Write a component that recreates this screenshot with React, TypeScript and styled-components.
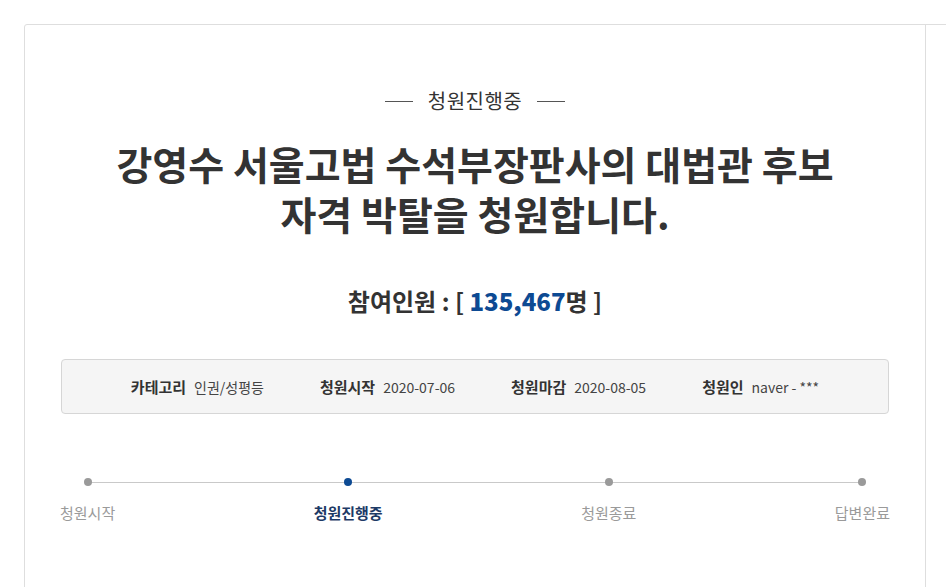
import React from 'react';
import styled, {createGlobalStyle} from 'styled-components';

const GlobalStyle = createGlobalStyle`
  html, body {
    margin: 0;
    background: #fff;
    overflow: hidden;
  }
  body {
    font-family: "Noto Sans CJK KR", "Noto Sans", sans-serif;
    color: #333;
  }
`;

const Page = styled.div`
  padding: 24px 0 0 24px;
`;

const Card = styled.div`
  display: flex;
  width: 1300px;
  border: 1px solid #dedede;
  border-radius: 3px 0 0 0;
  background: #fff;
`;

const Main = styled.section`
  width: 900px;
  flex-shrink: 0;
  padding: 63px 0 80px;
  border-right: 1px solid #dedede;
  text-align: center;
`;

const Aside = styled.aside`
  flex: 1;
`;

const Status = styled.div`
  display: flex;
  align-items: center;
  justify-content: center;
  gap: 15px;
  font-size: 20px;
  line-height: 26px;
  letter-spacing: 0.5px;
  color: #333;

  &::before, &::after {
    content: '';
    width: 28px;
    height: 1px;
    background: #555;
  }
`;

const Title = styled.h1`
  margin: 24px 0 0;
  font-size: 39px;
  line-height: 50px;
  font-weight: 700;
  color: #333;
`;

const Count = styled.div`
  margin-top: 45px;
  font-size: 24px;
  line-height: 36px;
  font-weight: 700;
  color: #333;

  > strong {
    color: #0d4a93;
  }
`;

const InfoBox = styled.ul`
  display: flex;
  justify-content: center;
  align-items: center;
  gap: 56px;
  margin: 40px 36px 0;
  padding: 0;
  height: 53px;
  list-style: none;
  background: #f5f5f5;
  border: 1px solid #d6d6d6;
  border-radius: 4px;
  font-size: 14px;
`;

const InfoItem = styled.li`
  display: flex;
  align-items: baseline;
  gap: 8px;
  color: #444;

  > b {
    font-size: 15px;
    color: #333;
    font-weight: 700;
  }
`;

const Steps = styled.ol`
  position: relative;
  display: flex;
  justify-content: space-between;
  margin: 64px 35px 0;
  padding: 0;
  list-style: none;

  &::before {
    content: '';
    position: absolute;
    top: 4px;
    left: 27px;
    right: 28px;
    height: 1px;
    background: #c9c9c9;
  }
`;

const Step = styled.li<{$active?: boolean}>`
  position: relative;
  display: flex;
  flex-direction: column;
  align-items: center;
  gap: 17px;
  font-size: 15px;
  line-height: 20px;
  color: ${p => (p.$active ? '#1d3a66' : '#9a9a9a')};
  font-weight: ${p => (p.$active ? 700 : 400)};

  &::before {
    content: '';
    width: 8px;
    height: 8px;
    border-radius: 50%;
    background: ${p => (p.$active ? '#0d4a93' : '#9a9a9a')};
  }
`;

const info = [
    {label: '카테고리', value: '인권/성평등'},
    {label: '청원시작', value: '2020-07-06'},
    {label: '청원마감', value: '2020-08-05'},
    {label: '청원인', value: 'naver - ***'},
];

const steps = ['청원시작', '청원진행중', '청원종료', '답변완료'];

export default function App() {
    return (
        <Page>
            <GlobalStyle/>
            <Card>
                <Main>
                    <Status>청원진행중</Status>
                    <Title>
                        강영수 서울고법 수석부장판사의 대법관 후보<br/>
                        자격 박탈을 청원합니다.
                    </Title>
                    <Count>
                        참여인원 : [ <strong>135,467</strong>명 ]
                    </Count>
                    <InfoBox>
                        {info.map(i => (
                            <InfoItem key={i.label}>
                                <b>{i.label}</b>
                                <span>{i.value}</span>
                            </InfoItem>
                        ))}
                    </InfoBox>
                    <Steps>
                        {steps.map((s, idx) => (
                            <Step key={s} $active={idx === 1}>{s}</Step>
                        ))}
                    </Steps>
                </Main>
                <Aside/>
            </Card>
        </Page>
    );
}
